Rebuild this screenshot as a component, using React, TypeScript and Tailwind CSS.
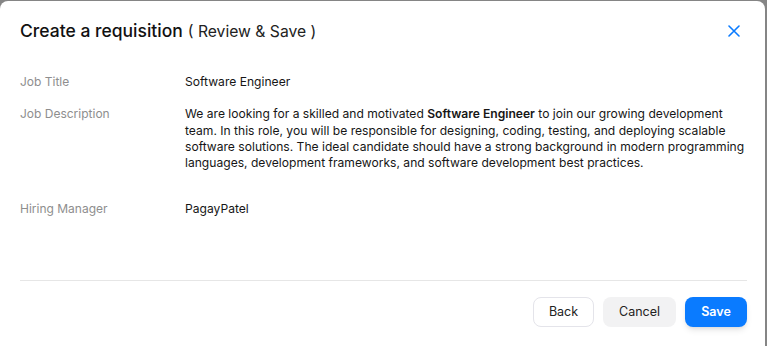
import { useState } from "react"

const rows = [
  { label: "Job Title", value: "Software Engineer" },
]

function CloseIcon() {
  return (
    <svg width="12" height="12" viewBox="0 0 12 12" fill="none" stroke="#0a7bff" strokeWidth="1.6" strokeLinecap="round">
      <path d="M1 1L11 11M11 1L1 11" />
    </svg>
  )
}

export default function App() {
  const [open, setOpen] = useState(true)

  return (
    <div className="h-[346px] w-[767px] overflow-hidden bg-[#858585] pt-px font-['Inter',sans-serif] text-[12.1px] leading-[16.3px]">
      <div className="h-[360px] w-[765px] rounded-t-lg bg-white px-5 pt-[18px]">
        {/* Header */}
        <div className="flex h-[24px] items-center">
          <h2 className="text-[17.5px] leading-[24px] font-medium text-[#111]">
            Create a requisition
            <span className="ml-[5px] text-[15.7px] font-normal text-[#222]">( Review &amp; Save )</span>
          </h2>
          <button
            onClick={() => setOpen(!open)}
            className="ml-auto mr-[1px] flex h-5 w-5 items-center justify-center"
          >
            <CloseIcon />
          </button>
        </div>

        {/* Details */}
        <div className="mt-[31px]">
          {rows.map((row) => (
            <div key={row.label} className="flex">
              <div className="w-[165px] shrink-0 text-[12px] text-[#8e8e8e]">{row.label}</div>
              <div className="text-[#161616]">{row.value}</div>
            </div>
          ))}

          <div className="mt-[16px] flex">
            <div className="w-[165px] shrink-0 text-[12px] text-[#8e8e8e]">Job Description</div>
            <p className="w-[562px] text-[#161616]">
              We are looking for a skilled and motivated <span className="font-semibold">Software Engineer</span> to join our growing development team. In this role, you will be responsible for designing, coding, testing, and deploying scalable software solutions. The ideal candidate should have a strong background in modern programming languages, development frameworks, and software development best practices.
            </p>
          </div>

          <div className="mt-[30px] flex">
            <div className="w-[165px] shrink-0 text-[12px] text-[#8e8e8e]">Hiring Manager</div>
            <div className="text-[#161616]">PagayPatel</div>
          </div>
        </div>

        {/* Footer */}
        <div className="mt-[62px] mr-[-2px] border-t border-[#e6e6e6] pt-4">
          <div className="flex justify-end gap-[9px] text-[12.5px]">
            <button className="h-[30px] w-[61px] rounded-lg border border-[#e4e4ea] bg-white text-[#222]">Back</button>
            <button className="h-[30px] w-[73px] rounded-lg bg-[#f2f2f3] text-[#222]">Cancel</button>
            <button className="h-[30px] w-[62px] rounded-lg bg-[#0a7bff] font-semibold text-white shadow-md">Save</button>
          </div>
        </div>
      </div>
    </div>
  )
}
